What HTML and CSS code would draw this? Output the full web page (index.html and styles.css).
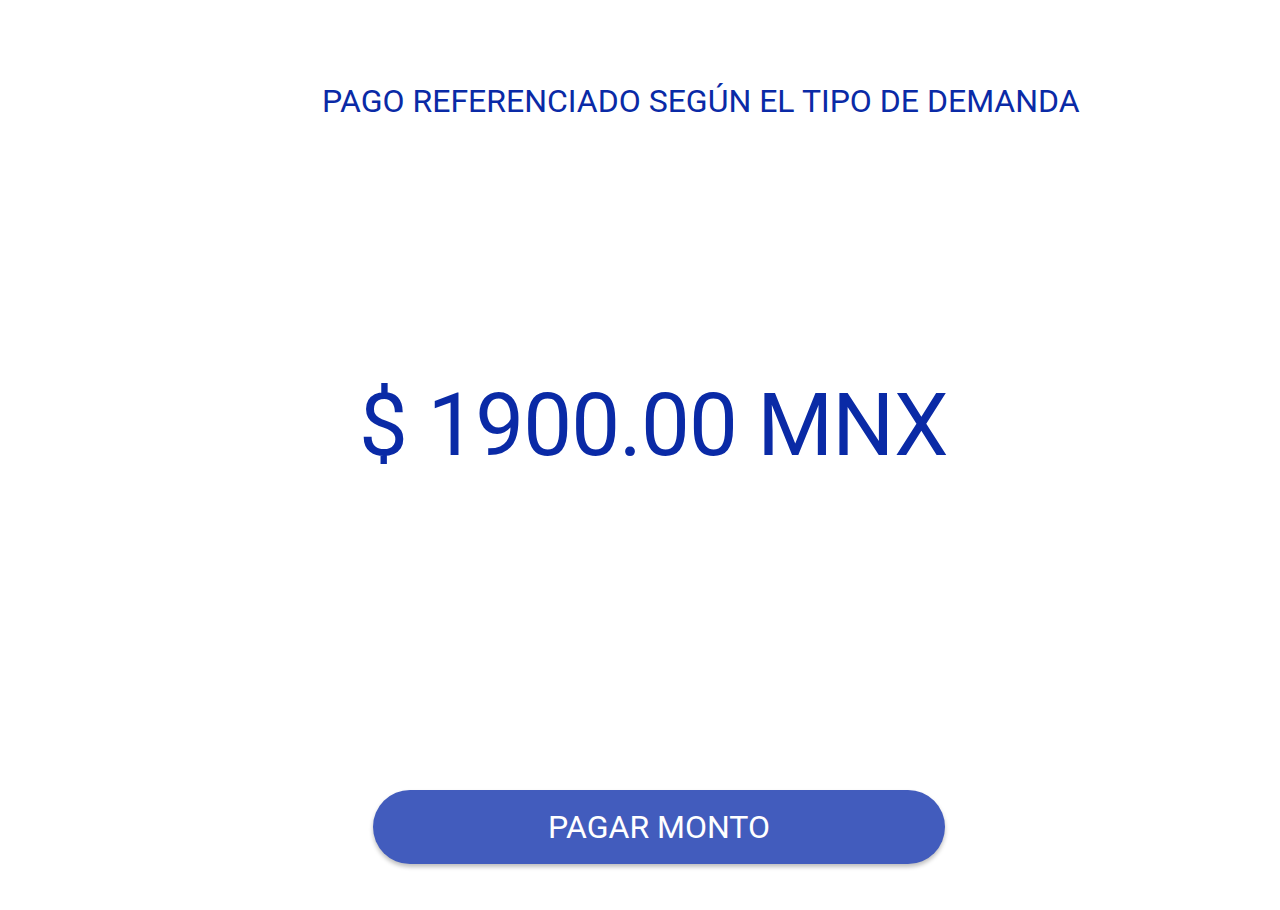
FILE: index.html
```html
<!DOCTYPE html>
<html lang="es">
<head>
<meta charset="utf-8">
<title>Pago referenciado</title>
<link rel="stylesheet" href="styles.css">
</head>
<body>
<main class="page">
  <h1 class="title">PAGO REFERENCIADO SEGÚN EL TIPO DE DEMANDA</h1>
  <p class="amount">$ 1900.00 MNX</p>
  <button class="pay-btn" type="button">PAGAR MONTO</button>
</main>
</body>
</html>
```
FILE: styles.css
```css
html, body {
  margin: 0;
  padding: 0;
  background: #ffffff;
}
.page {
  width: 1280px;
  height: 910px;
  display: flex;
  flex-direction: column;
  font-family: Roboto, "Noto Sans", sans-serif;
  color: #0a2aa6;
}
.title {
  margin: 80px 0 0 322px;
  font-size: 32px;
  font-weight: 400;
  line-height: 42px;
  letter-spacing: 0;
  white-space: nowrap;
}
.amount {
  margin: 253px 0 0 359px;
  font-size: 87px;
  font-weight: 400;
  line-height: 100px;
  letter-spacing: -1px;
  white-space: nowrap;
}
.pay-btn {
  margin: 315px 0 0 373px;
  width: 572px;
  height: 74px;
  border: none;
  border-radius: 37px;
  background: #425cbd;
  color: #ffffff;
  font-family: Roboto, "Noto Sans", sans-serif;
  font-size: 32px;
  box-shadow: 0 3px 4px rgba(0,0,0,0.25);
  padding: 0;
}
```
